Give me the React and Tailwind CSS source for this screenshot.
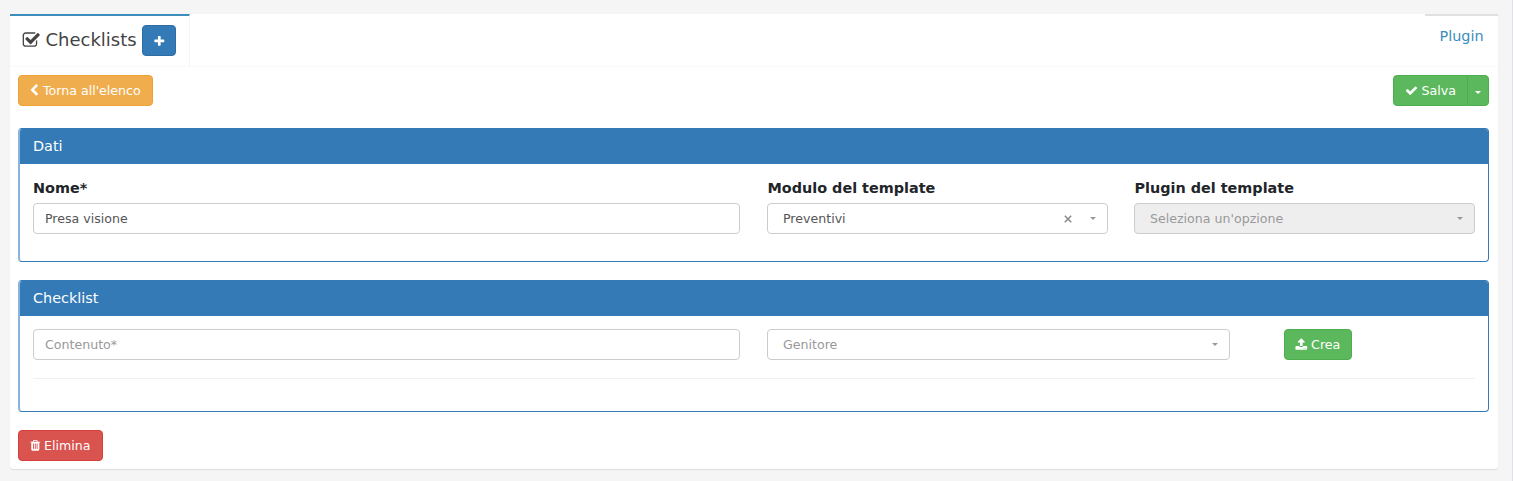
const paths = {
  checkSquare:
    "M1472 930v318q0 119-84.5 203.5t-203.5 84.5h-832q-119 0-203.5-84.5t-84.5-203.5v-832q0-119 84.5-203.5t203.5-84.5h832q63 0 117 25 15 7 18 23 3 17-9 29l-49 49q-10 10-23 10-3 0-9-2-23-6-45-6h-832q-66 0-113 47t-47 113v832q0 66 47 113t113 47h832q66 0 113-47t47-113v-254q0-13 9-22l64-64q10-10 23-10 6 0 12 3 20 8 20 29zm231-489l-814 814q-24 24-57 24t-57-24l-430-430q-24-24-24-57t24-57l110-110q24-24 57-24t57 24l263 263 647-647q24-24 57-24t57 24l110 110q24 24 24 57t-24 57z",
  plus:
    "M1600 736v192q0 40-28 68t-68 28h-416v416q0 40-28 68t-68 28h-192q-40 0-68-28t-28-68v-416h-416q-40 0-68-28t-28-68v-192q0-40 28-68t68-28h416v-416q0-40 28-68t68-28h192q40 0 68 28t28 68v416h416q40 0 68 28t28 68z",
  chevronLeft:
    "M1427 301l-531 531 531 531q19 19 19 45t-19 45l-166 166q-19 19-45 19t-45-19l-742-742q-19-19-19-45t19-45l742-742q19-19 45-19t45 19l166 166q19 19 19 45t-19 45z",
  check:
    "M1671 566q0 40-28 68l-724 724-136 136q-28 28-68 28t-68-28l-136-136-362-362q-28-28-28-68t28-68l136-136q28-28 68-28t68 28l294 295 656-657q28-28 68-28t68 28l136 136q28 28 28 68z",
  upload:
    "M1344 1472q0-26-19-45t-45-19-45 19-19 45 19 45 45 19 45-19 19-45zm256 0q0-26-19-45t-45-19-45 19-19 45 19 45 45 19 45-19 19-45zm128-224v320q0 40-28 68t-68 28h-1472q-40 0-68-28t-28-68v-320q0-40 28-68t68-28h427q21 56 70.5 92t110.5 36h256q61 0 110.5-36t70.5-92h427q40 0 68 28t28 68zm-325-648q-17 40-59 40h-256v448q0 26-19 45t-45 19h-256q-26 0-45-19t-19-45v-448h-256q-42 0-59-40-17-39 14-69l448-448q18-19 45-19t45 19l448 448q31 30 14 69z",
  trash:
    "M704 1376v-704q0-14-9-23t-23-9h-64q-14 0-23 9t-9 23v704q0 14 9 23t23 9h64q14 0 23-9t9-23zm256 0v-704q0-14-9-23t-23-9h-64q-14 0-23 9t-9 23v704q0 14 9 23t23 9h64q14 0 23-9t9-23zm256 0v-704q0-14-9-23t-23-9h-64q-14 0-23 9t-9 23v704q0 14 9 23t23 9h64q14 0 23-9t9-23zm-544-992h448l-48-117q-7-9-17-11h-317q-10 2-17 11zm928 32v64q0 14-9 23t-23 9h-96v948q0 83-47 143.5t-113 60.5h-832q-66 0-113-58.5t-47-141.5v-952h-96q-14 0-23-9t-9-23v-64q0-14 9-23t23-9h309l70-167q15-37 54-63t79-26h320q40 0 79 26t54 63l70 167h309q14 0 23 9t9 23z",
};

function Icon({ name, className, viewBox = "0 0 1792 1792" }) {
  return (
    <svg viewBox={viewBox} className={`shrink-0 fill-current ${className}`} aria-hidden="true">
      <path d={paths[name]} />
    </svg>
  );
}

function Caret({ className }) {
  return (
    <svg viewBox="0 0 6 3" className={`h-[3px] w-1.5 shrink-0 fill-current ${className}`} aria-hidden="true">
      <path d="M0 0h6L3 3z" />
    </svg>
  );
}

function Panel({ title, className, children }) {
  return (
    <section
      className={`flex flex-col overflow-hidden rounded border border-l-2 border-[#337ab7] border-l-[#8ab4de] bg-white ${className}`}
    >
      <h2 className="flex h-[35px] shrink-0 items-center bg-[#337ab7] pl-[13px] text-[14.4px] text-white">{title}</h2>
      {children}
    </section>
  );
}

function Label({ className = "", children }) {
  return (
    <label className={`block h-[26px] text-[14.4px] font-bold leading-[22px] text-[#212529] ${className}`}>{children}</label>
  );
}

function Select({ label, text, placeholder, disabled, clearable, className = "" }) {
  return (
    <div
      role="combobox"
      aria-label={label}
      aria-expanded="false"
      className={`flex h-[31px] items-center rounded border border-[#ccc] pl-[15px] pr-[11px] text-[12.6px] ${
        disabled ? "bg-[#eee]" : "bg-white"
      } ${className}`}
    >
      <span className={`flex-1 pt-0.5 ${placeholder ? "text-[#999]" : "text-[#555]"}`}>{text}</span>
      {clearable && (
        <svg viewBox="0 0 8 8" className="mr-[18px] size-2 text-[#888]" role="img" aria-label="Rimuovi">
          <path d="M.8.8l6.4 6.4M7.2.8L.8 7.2" fill="none" stroke="currentColor" strokeWidth="1.5" />
        </svg>
      )}
      <Caret className="text-[#999]" />
    </div>
  );
}

export default function App() {
  return (
    <div className="h-[481px] w-[1513px] border-r border-[#e0e0e6] bg-[#f5f5f5] pl-2.5 pr-3.5 pt-3.5 font-['DejaVu_Sans',sans-serif] whitespace-nowrap">
      <main className="h-[455px] rounded-b-[3px] bg-white shadow-[0_1px_1px_rgba(0,0,0,0.1)]">
        <nav className="flex h-[53px] items-start justify-between border-b border-[#f9f9f9]">
          <div className="flex h-[52px] w-[180px] border-t-2 border-r border-t-[#3c8dbc] border-r-[#f4f4f4] pl-3">
            <Icon name="checkSquare" className="mt-[14.5px] size-[18.5px] text-[#444]" />
            <h1 className="ml-[5px] mt-[10px] w-[96.5px] text-[18px] leading-[28px] text-[#444]">Checklists</h1>
            <button
              aria-label="Aggiungi"
              className="mt-[9.4px] flex h-[31px] w-[34px] items-center justify-center rounded border border-[#2e6da4] bg-[#337ab7] text-white"
            >
              <Icon name="plus" className="size-[12.6px]" />
            </button>
          </div>
          <a className="h-10 w-[73px] border-t-2 border-[#e0e0e0] pl-[14.5px] pt-[10px] text-[14.4px] leading-[20px] text-[#3c8dbc]">Plugin</a>
        </nav>

        <div className="pl-2 pr-[9px]">
          <div className="flex justify-between pt-2">
            <button className="flex h-[31px] w-[135px] items-center rounded border border-[#eea236] bg-[#f0ad4e] pl-[11px] text-[12.6px] text-white">
              <Icon name="chevronLeft" viewBox="450 0 1000 1792" className="mr-1 h-[12.6px] w-[9px]" />
              <span className="pt-0.5">Torna all'elenco</span>
            </button>
            <div className="flex h-[31px] text-[12.6px] text-white">
              <button className="flex w-[75px] items-center rounded-l border border-[#4cae4c] bg-[#5cb85c] pl-[11px]">
                <Icon name="check" className="mr-[3.5px] size-[13px]" />
                <span className="pt-0.5">Salva</span>
              </button>
              <button
                aria-label="Altre azioni"
                className="-ml-px flex w-[22px] items-center justify-center rounded-r border border-[#4cae4c] bg-[#5cb85c]"
              >
                <Caret className="mt-[3px]" />
              </button>
            </div>
          </div>

          <Panel title="Dati" className="mt-[22px] h-[134px]">
            <div className="flex px-[13px] pt-[13px]">
              <div className="w-[707px]">
                <Label>Nome*</Label>
                <div className="flex h-[31px] items-center rounded border border-[#ccc] pl-[11px] pt-0.5 text-[12.6px] text-[#555]">Presa visione</div>
              </div>
              <div className="ml-[27px] w-[341px]">
                <Label className="pl-[0.5px]">Modulo del template</Label>
                <Select label="Modulo del template" text="Preventivi" clearable />
              </div>
              <div className="ml-[26px] w-[341px]">
                <Label className="pl-[0.5px]">Plugin del template</Label>
                <Select label="Plugin del template" text="Seleziona un'opzione" placeholder disabled />
              </div>
            </div>
          </Panel>

          <Panel title="Checklist" className="mt-[18px] h-[132px]">
            <div className="mx-[13px] flex h-[63px] border-b border-[#f0f0f0] pt-[13px]">
              <div className="flex h-[31px] w-[707px] items-center rounded border border-[#ccc] pl-[11px] pt-0.5 text-[12.6px] text-[#999]">Contenuto*</div>
              <Select label="Genitore" text="Genitore" placeholder className="ml-[27px] w-[463px]" />
              <button className="ml-[54px] flex h-[31px] w-[68px] items-center rounded border border-[#4cae4c] bg-[#5cb85c] pl-[10px] text-[12.6px] text-white">
                <Icon name="upload" viewBox="0 0 1792 1792" className="mr-[3.5px] size-[12.6px]" />
                <span className="pt-0.5">Crea</span>
              </button>
            </div>
          </Panel>

          <button className="mt-[18px] flex h-[31px] w-[85px] items-center rounded border border-[#d43f3a] bg-[#d9534f] pl-[10px] text-[12.6px] text-white">
            <Icon name="trash" className="mr-[2.5px] size-[12.6px]" />
            <span className="pt-0.5">Elimina</span>
          </button>
        </div>
      </main>
    </div>
  );
}
